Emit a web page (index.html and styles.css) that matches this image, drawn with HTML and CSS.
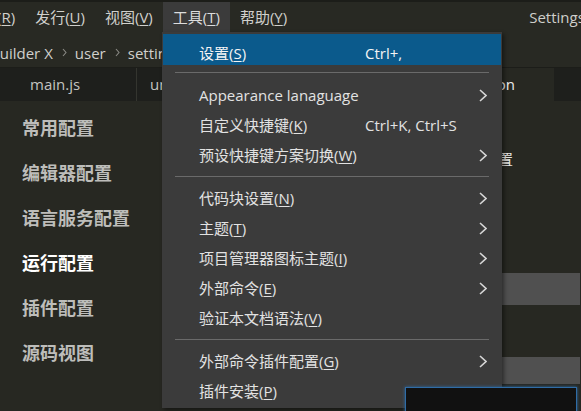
FILE: index.html
```html
<!DOCTYPE html>
<html lang="zh-CN">
<head>
<meta charset="utf-8">
<title>Settings - HBuilder X</title>
<link rel="stylesheet" href="styles.css">
</head>
<body>
<div class="app">
  <div class="menubar">
    <div class="mitem first">运行(<u>R</u>)</div>
    <div class="mitem">发行(<u>U</u>)</div>
    <div class="mitem">视图(<u>V</u>)</div>
    <div class="mitem open">工具(<u>T</u>)</div>
    <div class="mitem">帮助(<u>Y</u>)</div>
    <div class="wintitle">Settings - HBuilder X</div>
  </div>

  <div class="crumbs">
    <span class="crumb first">HBuilder X</span>
    <svg class="csep" width="5" height="9" viewBox="0 0 5 9"><polyline points="1,1 4,4.5 1,8" fill="none" stroke="#8a8a86" stroke-width="1.1"/></svg>
    <span class="crumb">user</span>
    <svg class="csep" width="5" height="9" viewBox="0 0 5 9"><polyline points="1,1 4,4.5 1,8" fill="none" stroke="#8a8a86" stroke-width="1.1"/></svg>
    <span class="crumb">settings.json</span>
  </div>

  <div class="tabs">
    <div class="tab t1">main.js</div>
    <div class="tab t2">untitled-1</div>
    <div class="tab t3 active">settings.json</div>
    <div class="tabfill"></div>
  </div>

  <div class="workspace">
    <aside class="side">
      <div class="sitem">常用配置</div>
      <div class="sitem">编辑器配置</div>
      <div class="sitem">语言服务配置</div>
      <div class="sitem active">运行配置</div>
      <div class="sitem">插件配置</div>
      <div class="sitem">源码视图</div>
    </aside>
    <main class="main">
      <div class="heading">运行配置</div>
      <div class="field f1"></div>
      <div class="field f2"></div>
    </main>
  </div>

  <div class="dropdown">
    <div class="item hl"><span class="lbl">设置(<u>S</u>)</span><span class="key">Ctrl+,</span><span class="arr"></span></div>
    <div class="sep first"><i></i></div>
    <div class="item"><span class="lbl">Appearance lanaguage</span><span class="key"></span><span class="arr"><svg width="8" height="13" viewBox="0 0 8 13"><polyline points="1,1 7,6.5 1,12" fill="none" stroke="#d6d6d6" stroke-width="1.6"/></svg></span></div>
    <div class="item"><span class="lbl">自定义快捷键(<u>K</u>)</span><span class="key">Ctrl+K, Ctrl+S</span><span class="arr"></span></div>
    <div class="item"><span class="lbl">预设快捷键方案切换(<u>W</u>)</span><span class="key"></span><span class="arr"><svg width="8" height="13" viewBox="0 0 8 13"><polyline points="1,1 7,6.5 1,12" fill="none" stroke="#d6d6d6" stroke-width="1.6"/></svg></span></div>
    <div class="sep"><i></i></div>
    <div class="item"><span class="lbl">代码块设置(<u>N</u>)</span><span class="key"></span><span class="arr"><svg width="8" height="13" viewBox="0 0 8 13"><polyline points="1,1 7,6.5 1,12" fill="none" stroke="#d6d6d6" stroke-width="1.6"/></svg></span></div>
    <div class="item"><span class="lbl">主题(<u>T</u>)</span><span class="key"></span><span class="arr"><svg width="8" height="13" viewBox="0 0 8 13"><polyline points="1,1 7,6.5 1,12" fill="none" stroke="#d6d6d6" stroke-width="1.6"/></svg></span></div>
    <div class="item"><span class="lbl">项目管理器图标主题(<u>I</u>)</span><span class="key"></span><span class="arr"><svg width="8" height="13" viewBox="0 0 8 13"><polyline points="1,1 7,6.5 1,12" fill="none" stroke="#d6d6d6" stroke-width="1.6"/></svg></span></div>
    <div class="item"><span class="lbl">外部命令(<u>E</u>)</span><span class="key"></span><span class="arr"><svg width="8" height="13" viewBox="0 0 8 13"><polyline points="1,1 7,6.5 1,12" fill="none" stroke="#d6d6d6" stroke-width="1.6"/></svg></span></div>
    <div class="item"><span class="lbl">验证本文档语法(<u>V</u>)</span><span class="key"></span><span class="arr"></span></div>
    <div class="sep"><i></i></div>
    <div class="item"><span class="lbl">外部命令插件配置(<u>G</u>)</span><span class="key"></span><span class="arr"><svg width="8" height="13" viewBox="0 0 8 13"><polyline points="1,1 7,6.5 1,12" fill="none" stroke="#d6d6d6" stroke-width="1.6"/></svg></span></div>
    <div class="item"><span class="lbl">插件安装(<u>P</u>)</span><span class="key"></span><span class="arr"></span></div>
  </div>

  <div class="focusbox"></div>
</div>
</body>
</html>
```

FILE: styles.css
```css
* { box-sizing: border-box; }
html, body { margin: 0; padding: 0; }
body {
  background: #272822;
  font-family: "Open Sans", "Noto Sans CJK SC", sans-serif;
  font-size: 15px;
  color: #d2d2d0;
  overflow: hidden;
}
.app {
  position: relative;
  width: 581px;
  height: 411px;
  overflow: hidden;
  background: #272822;
}
u { text-decoration: underline; text-underline-offset: 2px; }

/* menubar */
.menubar {
  display: flex;
  height: 32px;
  border-top: 2px solid #1c1d19;
  background: #282923;
  white-space: nowrap;
  overflow: hidden;
}
.mitem {
  flex: 0 0 auto;
  height: 30px;
  line-height: 30px;
  padding: 0 10px;
  color: #d0d0cc;
}
.mitem.first { margin-left: -43px; }
.mitem.open { background: #3b3b3b; color: #dcdcdc; }
.wintitle {
  flex: 0 0 auto;
  margin-left: 232px;
  line-height: 30px;
  color: #cfcfcb;
}

/* breadcrumbs */
.crumbs {
  display: flex;
  align-items: center;
  height: 36px;
  padding-top: 6px;
  background: #282923;
  border-bottom: 1px solid #1c1d19;
  white-space: nowrap;
  overflow: hidden;
}
.crumb { color: #d0d0cc; flex: 0 0 auto; }
.crumb.first { margin-left: -21px; }
.csep { flex: 0 0 auto; margin: 0 8px 0 9px; }

/* tabs */
.tabs {
  display: flex;
  height: 33px;
  background: #1e1f1c;
}
.tab {
  flex: 0 0 auto;
  line-height: 33px;
  color: #c4c4c0;
  white-space: nowrap;
}
.t1 { width: 137px; padding-left: 30px; border-right: 1px solid #34352f; }
.t2 { width: 210px; padding-left: 13px; border-right: 1px solid #34352f; }
.t3 { width: 207px; text-align: right; padding-right: 39px; }
.tab.active { background: #272822; color: #ececec; }
.tabfill { flex: 1; }

/* workspace */
.workspace {
  display: flex;
  height: 310px;
}
.side {
  width: 162px;
  flex: 0 0 auto;
  padding-top: 4px;
  padding-left: 22px;
}
.sitem {
  height: 45px;
  line-height: 45px;
  font-family: "Noto Sans CJK SC", sans-serif;
  font-size: 18px;
  font-weight: 700;
  color: #bdbdba;
}
.sitem.active { color: #ffffff; }
.main {
  flex: 1;
  padding-right: 1px;
}
.heading {
  margin-top: 49px;
  padding-left: 291px;
  height: 18px;
  line-height: 18px;
  color: #e4e4e2;
  font-family: "Noto Sans CJK SC", sans-serif;
  font-size: 15px;
}
.field { background: #505050; }
.f1 { margin-top: 105px; height: 32px; }
.f2 { margin-top: 52px; height: 27px; }

/* dropdown */
.dropdown {
  position: absolute;
  left: 162px;
  top: 32px;
  width: 340px;
  padding: 2px 1px;
  background: #3b3b3b;
  box-shadow: 2px 2px 4px rgba(0, 0, 0, 0.45);
  z-index: 2;
}
.item {
  display: grid;
  grid-template-columns: 166px 1fr 20px;
  align-items: center;
  height: 30px;
  line-height: 30px;
  padding-left: 36px;
  padding-right: 14px;
  color: #e2e2e2;
  white-space: nowrap;
}
.item.hl {
  height: 31px;
  line-height: 26px;
  padding-top: 6px;
  background: #0b5a8c;
  color: #f4f4f4;
}
.arr { display: flex; justify-content: flex-end; align-items: center; }
.arr svg { display: block; }
.sep { height: 13px; padding: 6px 12px 0; }
.sep.first { height: 15px; padding-top: 7px; }
.sep i { display: block; height: 1px; background: #6a6a6a; }

/* focused input overlay */
.focusbox {
  position: absolute;
  left: 405px;
  top: 387px;
  width: 172px;
  height: 30px;
  background: #111111;
  border: 1px solid #2f6ca6;
  box-shadow: 0 0 3px #2f6ca6;
  z-index: 3;
}
```
